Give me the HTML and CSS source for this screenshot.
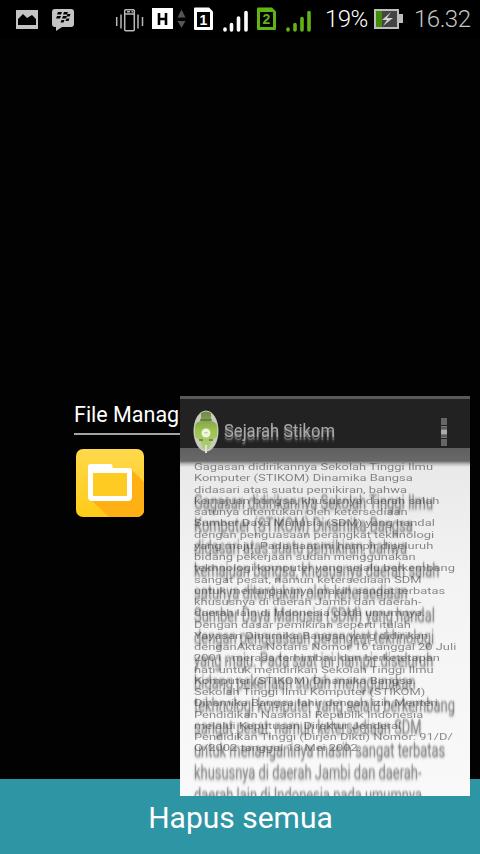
FILE: index.html
```html
<!DOCTYPE html>
<html lang="id">
<head>
<meta charset="utf-8">
<title>Aplikasi terbaru</title>
<link rel="stylesheet" href="styles.css">
</head>
<body>
<main class="screen">
  <header class="status">
    <svg class="status-icons" width="320" height="38" viewBox="0 0 320 38">
      <rect x="16" y="10" width="22" height="19" fill="#c4c4c4"/>
      <path d="M18 25v-6l5-5 4 4 5-3 4 4v6z" fill="#000"/>
      <path d="M55 9h16q3 0 3 3v12q0 3-3 3h-9l-6 4v-4h-1q-3 0-3-3V12q0-3 3-3z" fill="#c4c4c4"/>
      <path d="M58 12h4l-1 2.500h-4zM64 12h4l-1 2.500h-4zM57 16h4l-1 2.500h-4zM63 16h4l-1 2.500h-4zM67.500 14h3l-1 2.500h-3zM66.500 18.500h3l-1 2.500h-3zM61.500 20h3l-1 2.500h-3z" fill="#000"/>
      <g fill="none" stroke="#b8b8b8" stroke-width="1.500"><rect x="124.700" y="9.700" width="9.600" height="21" rx="1"/><path d="M124.700 14h9.600M127 11.700h3M131.500 11.700h1.500M121 14.500v14M116.700 17v9M138 14.500v14M142.500 17v9"/></g>
      <rect x="152" y="8" width="21" height="21" fill="#fff"/>
      <path d="M159 13v12M166 13v12M159 19h7" fill="none" stroke="#000" stroke-width="2.600"/>
      <path d="M177.500 17.500l4-8 4 8zM177.500 21h8l-4 7z" fill="#555"/>
      <path d="M195 7.500h14l4 4V29q0 1-1 1h-17q-1 0-1-1V8.500q0-1 1-1z" fill="#fff"/>
      <rect x="197" y="12" width="13" height="15" fill="#000"/>
      <text x="203.300" y="24.500" class="sim sim-one">1</text>
      <path d="M225 29v1M231.500 24.500v5.500M238.500 18v12M246 12.500v17.500" stroke="#fff" stroke-width="3.600" stroke-linecap="round"/>
      <path d="M258 7.500h14l4 4V29q0 1-1 1h-17q-1 0-1-1V8.500q0-1 1-1z" fill="#62b314"/>
      <rect x="260" y="12" width="13" height="15" fill="#000"/>
      <text x="266.500" y="24" class="sim sim-two">2</text>
      <path d="M288 29v1M295 24.500v5.500M302 18.500v11.500M309 12.500v17.500" stroke="#62b314" stroke-width="3.600" stroke-linecap="round"/>
    </svg>
    <span class="percent">19%</span>
    <svg class="battery" width="30" height="20" viewBox="0 0 30 20">
      <path d="M0 0h25v5h4v9h-4v6H0z" fill="#bdbdbd"/>
      <rect x="2" y="2" width="21" height="16" fill="#444"/>
      <rect x="2" y="2" width="6" height="16" fill="#458a08"/>
      <path d="M17 3l-9 8h5l-4 6 10-8h-6z" fill="#d0d0d0"/>
    </svg>
    <time class="clock">16.32</time>
  </header>

  <section class="recent">
    <h1 class="app-name">File Manager</h1>
    <svg class="folder" width="68" height="68" viewBox="0 0 68 68">
      <defs>
        <linearGradient id="tile" x2="0" y2="1"><stop stop-color="#ffd94d"/><stop offset="1" stop-color="#fecb16"/></linearGradient>
        <clipPath id="round"><rect width="68" height="68" rx="7"/></clipPath>
      </defs>
      <g clip-path="url(#round)">
        <rect width="68" height="68" fill="url(#tile)"/>
        <path d="M55 20l13 13v35H33L14 50z" fill="#feb014"/>
        <path fill="#fff" d="M14.500 15h20q2 0 2 2v2H53q3 0 3 3v26q0 4-4 4H16q-4 0-4-4V17.500q0-2.500 2.500-2.500z"/>
        <path d="M17 24h34v23H17z" fill="#fecb22"/>
      </g>
    </svg>
  </section>

  <footer class="clear-bar"><button class="clear">Hapus semua</button></footer>

  <article class="preview">
    <header class="preview-bar">
      <svg class="logo" width="28" height="46" viewBox="0 0 28 46">
        <defs><linearGradient id="leaf" x2="0" y2="1"><stop stop-color="#71844f"/><stop offset=".5" stop-color="#9cc34c"/><stop offset="1" stop-color="#b0cf77"/></linearGradient></defs>
        <ellipse cx="14" cy="22" rx="12.500" ry="20.500" fill="#c6cbbd"/>
        <path d="M9 4q5-3 10 0v8q5 1 6 5v11l-5 3-3 9h-6l-3-9-5-3V17q1-4 6-5z" fill="url(#leaf)"/>
        <path d="M8 11h12M7 31h4M17 31h4" stroke="#5c783a" stroke-width="1.500"/>
        <circle cx="14" cy="24" r="4.500" fill="#edf5df"/>
        <path d="M12.500 23l1.500 1.500 1.500-1.500" stroke="#a5c172" fill="none"/>
        <path d="M14 36v8" stroke="#dce4d4" stroke-width="2"/>
      </svg>
      <span class="title">Sejarah Stikom</span>
      <svg class="more" width="6" height="30" viewBox="0 0 6 30">
        <path d="M0 1h6v7H0zM0 22h6v7H0z" fill="#666"/>
        <path d="M0 9h6v12H0z" fill="#777"/><path d="M0 13h6v4H0z" fill="#aaa"/>
        <path d="M0 11h6M0 19h6" stroke="#444"/>
      </svg>
    </header>
    <div class="paper">
      <p class="copy stretched" aria-hidden="true">Gagasan didirikannya Sekolah Tinggi Ilmu
Komputer (STIKOM) Dinamika Bangsa
didasari atas suatu pemikiran, bahwa
kemajuan bangsa, khususnya daerah salah
satunya ditentukan oleh ketersediaan
Sumber Daya Manusia (SDM) yang handal
dengan penguasaan perangkat tekhnologi
yang maju. Pada saat ini hampir diseluruh
bidang pekerjaan sudah menggunakan
tekhnologi komputer yang selalu berkembang
sangat pesat, namun ketersediaan SDM
untuk menanganinya masih sangat terbatas
khususnya di daerah Jambi dan daerah-
daerah lain di Indonesia pada umumnya.</p>
      <p class="copy compact">Gagasan didirikannya Sekolah Tinggi Ilmu
Komputer (STIKOM) Dinamika Bangsa
didasari atas suatu pemikiran, bahwa
kemajuan bangsa, khususnya daerah salah
satunya ditentukan oleh ketersediaan
Sumber Daya Manusia (SDM) yang handal
dengan penguasaan perangkat tekhnologi
yang maju. Pada saat ini hampir diseluruh
bidang pekerjaan sudah menggunakan
tekhnologi komputer yang selalu berkembang
sangat pesat, namun ketersediaan SDM
untuk menanganinya masih sangat terbatas
khususnya di daerah Jambi dan daerah-
daerah lain di Indonesia pada umumnya.
Dengan dasar pemikiran seperti itulah
Yayasan Dinamika Bangsa yang didirikan
denganAkta Notaris Nomor 16 tanggal 20 Juli
2001 , merasa terhimbau dan berketetapan
hati untuk mendirikan Sekolah Tinggi Ilmu
Komputer (STIKOM) Dinamika Bangsa.
Sekolah Tinggi Ilmu Komputer (STIKOM)
Dinamika Bangsa lahir dengan izin Menteri
Pendidikan Nasional Republik Indonesia
melalui Keputusan Direktur Jenderal
Pendidikan Tinggi (Dirjen Dikti) Nomor: 91/D/
O/2002 tanggal 13 Mei 2002.</p>
    </div>
  </article>
</main>
</body>
</html>
```
FILE: styles.css
```css
* { box-sizing: border-box; }
body { margin: 0; background: #000; font-family: Roboto, sans-serif; }
.screen { position: relative; width: 480px; height: 854px; display: flex; flex-direction: column; overflow: hidden; background: #020202; }
.status { height: 38px; display: flex; align-items: center; background: #000; }
.status-icons { flex: none; }
.sim { font: bold 14px "Liberation Sans", sans-serif; text-anchor: middle; }
.sim-one { fill: #fff; }
.sim-two { fill: #62b314; }
.percent { width: 54px; padding-left: 5px; font-size: 24px; font-weight: 300; line-height: 38px; letter-spacing: -.6px; color: #fff; white-space: nowrap; }
.battery { flex: none; }
.clock { margin-left: 10px; font-size: 24px; line-height: 38px; font-weight: 300; letter-spacing: -.5px; color: #c6c6c6; }
.recent { flex: 1; padding: 363px 0 0 74px; }
.app-name { margin: 0 0 14px; height: 34px; width: 200px; border-bottom: 2px solid #a6a2a8; color: #fff; font-size: 21.5px; font-weight: 400; line-height: 28px; }
.folder { display: block; margin-left: 2px; }
.clear-bar { height: 75px; background: #2e95a5; display: flex; justify-content: center; }
.clear { border: 0; padding: 0 0 0 1px; background: none; color: #fff; font: 400 30px/78px Roboto, sans-serif; }
.preview { position: absolute; left: 180px; top: 396px; width: 290px; height: 400px; overflow: hidden; background: #f3f3f3; }
.preview-bar { height: 52px; display: flex; align-items: center; padding: 16px 23px 0 12px; border-top: 3px solid #595959; background: #222; }
.logo { flex: none; filter: blur(.5px); }
.title { margin-left: 4px; flex: 1; font-size: 16.6px; line-height: 24px; color: #aaa; text-shadow: 0 2px 1px #777, 0 4px 2px #444; filter: blur(.4px); transform: scaleY(1.08); }
.more { filter: blur(.7px); }
.paper { height: 348px; display: grid; align-items: start; padding-left: 14px; background: linear-gradient(#606060 0, #686868 13px, #bbb 16px, #e9e9e9 19px, #f3f3f3 130px, #f9f9f9 100%); }
.copy { grid-area: 1 / 1; margin: 0; white-space: pre; font-size: 13px; line-height: 15px; transform-origin: 0 0; }
.stretched { margin-top: 43px; color: rgba(0, 0, 0, .2); text-shadow: 0 0 1px rgba(0, 0, 0, .25), 0 1px 2px rgba(0, 0, 0, .25); transform: scale(.993, 1.5); filter: blur(.8px); }
.compact { margin-top: 13px; color: rgba(45, 45, 45, .55); transform: scale(.993, .75); }
```
